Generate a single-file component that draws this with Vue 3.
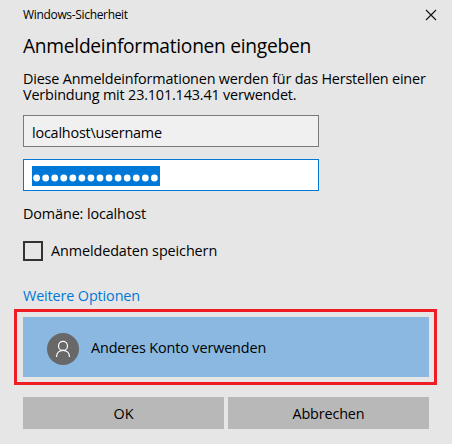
<script setup>
import { ref } from 'vue'

const username = 'localhost\\username'
const passwordLength = 14
const remember = ref(false)
</script>

<template>
  <main class="dialog">
    <header class="titlebar">
      <span class="caption">Windows-Sicherheit</span>
      <svg class="close" viewBox="0 0 12 12" role="button" aria-label="Schließen">
        <path d="M1 1 L11 11 M11 1 L1 11" />
      </svg>
    </header>
    <h1><span class="heading">Anmeldeinformationen eingeben</span></h1>
    <p class="message">
      <span class="line first">Diese Anmeldeinformationen werden für das Herstellen einer</span>
      <span class="line second">Verbindung mit 23.101.143.41 verwendet.</span>
    </p>
    <div class="field"><span class="user">{{ username }}</span></div>
    <div class="field active">
      <svg class="selection" viewBox="0 0 128 20">
        <circle v-for="n in passwordLength" :key="n" :cx="4.6 + (n - 1) * 9.06" cy="12" r="3.4" />
      </svg>
    </div>
    <p class="domain"><span>Domäne: localhost</span></p>
    <div class="remember" @click="remember = !remember">
      <span class="box" :class="{ checked: remember }"></span>
      <span class="remember-text">Anmeldedaten speichern</span>
    </div>
    <a class="more"><span>Weitere Optionen</span></a>
    <section class="highlight">
      <div class="account">
        <svg class="avatar" viewBox="0 0 32 32">
          <circle class="disc" cx="16" cy="16" r="16" />
          <circle class="person" cx="16" cy="12.9" r="4.5" />
          <path class="person" d="M9.5 24 C9.5 20 12.2 17.4 16 17.4 S22.5 20 22.5 24" />
        </svg>
        <span class="account-text">Anderes Konto verwenden</span>
      </div>
    </section>
    <footer class="actions">
      <button><span class="ok">OK</span></button>
      <button><span class="cancel">Abbrechen</span></button>
    </footer>
  </main>
</template>

<style>
body {
  background: #e6e6e6;
}
</style>

<style scoped>
.dialog {
  box-sizing: border-box;
  width: 452px;
  height: 444px;
  padding: 5px 15px 0 23px;
  overflow: hidden;
  background: #e6e6e6;
  color: #000;
  font: 14.4px/16px "Open Sans", "Noto Sans", sans-serif;
}
span {
  white-space: nowrap;
}
.titlebar {
  display: flex;
  justify-content: space-between;
  align-items: center;
  height: 20px;
  font-size: 12px;
}
.caption {
  letter-spacing: -0.33px;
}
.close {
  width: 12px;
  height: 12px;
  stroke: #111;
  stroke-width: 1.1;
  fill: none;
}
h1 {
  margin: 8px 0 0;
  height: 26px;
  font-size: 19.2px;
  line-height: 26px;
  font-weight: 400;
  letter-spacing: -0.28px;
}
.message {
  margin: 12px 0 0;
  height: 44px;
}
.line {
  display: block;
  width: max-content;
}
.first {
  letter-spacing: -0.18px;
}
.second {
  letter-spacing: -0.17px;
}
.field {
  box-sizing: border-box;
  display: flex;
  align-items: center;
  width: 296px;
  height: 32px;
  padding: 4px 8px 0;
  border: 1px solid #7a7a7a;
  background: #f0f0f0;
}
.user {
  letter-spacing: -0.2px;
}
.field.active {
  margin-top: 12px;
  padding-top: 2px;
  border-color: #0078d7;
  background: #fff;
}
.selection {
  width: 128px;
  height: 20px;
  margin-top: -1px;
  background: #0078d7;
  fill: #fff;
}
.domain {
  margin: 14px 0 0;
  height: 18px;
  line-height: 18px;
  letter-spacing: -0.12px;
}
.remember {
  display: flex;
  align-items: center;
  gap: 8px;
  height: 20px;
  margin-top: 18px;
}
.remember-text {
  letter-spacing: -0.1px;
}
.box {
  box-sizing: border-box;
  width: 20px;
  height: 20px;
  border: 2px solid #333;
}
.box.checked {
  background: #0078d7;
}
.more {
  display: block;
  margin-top: 25px;
  height: 20px;
  line-height: 20px;
  color: #0078d7;
  letter-spacing: -0.13px;
}
.highlight {
  box-sizing: border-box;
  width: 423px;
  height: 76px;
  margin: 3px 0 0 -9px;
  padding: 5px 5px 5px 6px;
  border: 3px solid #f01c24;
}
.account {
  box-sizing: border-box;
  display: flex;
  align-items: center;
  gap: 12px;
  height: 60px;
  padding: 4px 24px 0;
  background: #8ab8e0;
}
.avatar {
  width: 32px;
  height: 32px;
}
.disc {
  fill: #686868;
}
.person {
  fill: none;
  stroke: #fff;
  stroke-width: 1.2;
}
.account-text {
  margin-top: -2px;
  letter-spacing: -0.13px;
}
.actions {
  display: flex;
  gap: 4px;
  margin-top: 12px;
}
button {
  width: 201px;
  height: 32px;
  padding: 2px 0 0;
  border: 0;
  background: #b8b8b8;
  color: #000;
  font: inherit;
}
.cancel {
  letter-spacing: -0.15px;
}
</style>
